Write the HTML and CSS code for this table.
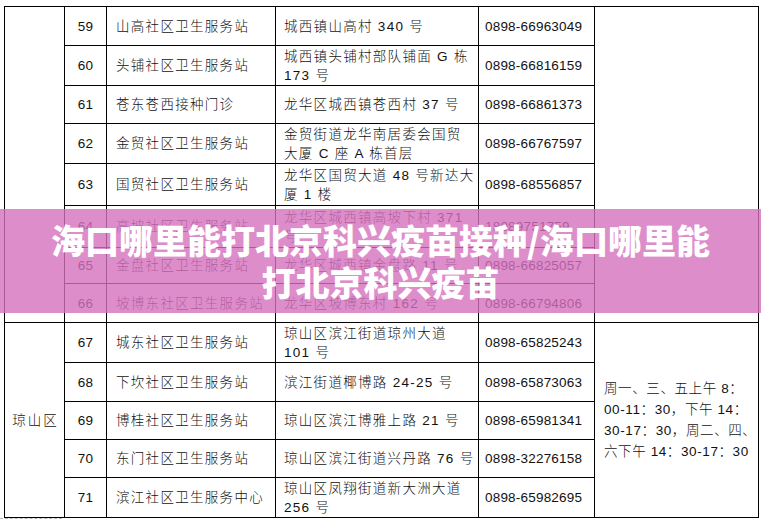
FILE: index.html
```html
<!DOCTYPE html>
<html lang="zh-CN">
<head>
<meta charset="utf-8">
<title>海口哪里能打北京科兴疫苗</title>
<link rel="stylesheet" href="styles.css">
</head>
<body>
<div class="page">
  <table class="sites">
    <colgroup>
      <col class="c-district"><col class="c-no"><col class="c-name"><col class="c-addr"><col class="c-tel"><col class="c-hours">
    </colgroup>
    <tbody>
      <tr class="h39">
        <td class="district" rowspan="8"></td>
        <td class="no">59</td>
        <td class="name">山高社区卫生服务站</td>
        <td class="addr">城西镇山高村 340 号</td>
        <td class="tel">0898-66963049</td>
        <td class="hours" rowspan="8"></td>
      </tr>
      <tr class="h40">
        <td class="no">60</td>
        <td class="name">头铺社区卫生服务站</td>
        <td class="addr">城西镇头铺村部队铺面 G 栋<br>173 号</td>
        <td class="tel">0898-66816159</td>
      </tr>
      <tr class="h38">
        <td class="no">61</td>
        <td class="name">苍东苍西接种门诊</td>
        <td class="addr">龙华区城西镇苍西村 37 号</td>
        <td class="tel">0898-66861373</td>
      </tr>
      <tr class="h40">
        <td class="no">62</td>
        <td class="name">金贸社区卫生服务站</td>
        <td class="addr">金贸街道龙华南居委会国贸<br>大厦 C 座 A 栋首层</td>
        <td class="tel">0898-66767597</td>
      </tr>
      <tr class="h42">
        <td class="no">63</td>
        <td class="name">国贸社区卫生服务站</td>
        <td class="addr">龙华区国贸大道 48 号新达大<br>厦 1 楼</td>
        <td class="tel">0898-68556857</td>
      </tr>
      <tr class="h42">
        <td class="no">64</td>
        <td class="name">高坡社区卫生服务站</td>
        <td class="addr">龙华区城西镇高坡下村 371<br>号</td>
        <td class="tel">18089751759</td>
      </tr>
      <tr class="h36">
        <td class="no">65</td>
        <td class="name">金盘社区卫生服务站</td>
        <td class="addr">龙华区城西镇金盘路 11 号</td>
        <td class="tel">0898-66825057</td>
      </tr>
      <tr class="h39">
        <td class="no">66</td>
        <td class="name">坡博东社区卫生服务站</td>
        <td class="addr">龙华区坡博东村 162 号</td>
        <td class="tel">0898-66794806</td>
      </tr>
      <tr class="h40">
        <td class="district" rowspan="5">琼山区</td>
        <td class="no">67</td>
        <td class="name">城东社区卫生服务站</td>
        <td class="addr">琼山区滨江街道琼州大道<br>101 号</td>
        <td class="tel">0898-65825243</td>
        <td class="hours" rowspan="5">周一、三、五上午 8：<br>00-11：30，下午 14：<br>30-17：30，周二、四、<br>六下午 14：30-17：30</td>
      </tr>
      <tr class="h39">
        <td class="no">68</td>
        <td class="name">下坎社区卫生服务站</td>
        <td class="addr">滨江街道椰博路 24-25 号</td>
        <td class="tel">0898-65873063</td>
      </tr>
      <tr class="h38">
        <td class="no">69</td>
        <td class="name">博桂社区卫生服务站</td>
        <td class="addr">琼山区滨江博雅上路 21 号</td>
        <td class="tel">0898-65981341</td>
      </tr>
      <tr class="h38">
        <td class="no">70</td>
        <td class="name">东门社区卫生服务站</td>
        <td class="addr">琼山区滨江街道兴丹路 76 号</td>
        <td class="tel">0898-32276158</td>
      </tr>
      <tr class="h40">
        <td class="no">71</td>
        <td class="name">滨江社区卫生服务中心</td>
        <td class="addr">琼山区凤翔街道新大洲大道<br>256 号</td>
        <td class="tel">0898-65982695</td>
      </tr>
    </tbody>
  </table>
  <div class="page-break"></div>
</div>
<div class="banner">
  <h1 class="banner-title">海口哪里能打北京科兴疫苗接种/海口哪里能<br>打北京科兴疫苗</h1>
</div>
</body>
</html>
```

FILE: styles.css
```css
html, body {
  margin: 0;
  padding: 0;
  background: #fff;
}

body {
  position: relative;
  width: 761px;
  height: 522px;
  overflow: hidden;
  font-family: "Liberation Sans", "Noto Sans CJK SC", sans-serif;
  color: #111;
}

.page {
  padding: 6px 0 0 4px;
}

.sites {
  border-collapse: collapse;
  table-layout: fixed;
  width: 755px;
}

.c-district { width: 60px; }
.c-no { width: 42px; }
.c-name { width: 169px; }
.c-addr { width: 203px; }
.c-tel { width: 116px; }
.c-hours { width: 164px; }

.sites td {
  border: 1px solid #000;
  padding: 0;
  vertical-align: middle;
  font-size: 13.5px;
  line-height: 19px;
  font-weight: 300;
  white-space: nowrap;
  overflow: hidden;
}

.h36 td { height: 35px; }
.h38 td { height: 37px; }
.h39 td { height: 38px; }
.h40 td { height: 39px; }
.h42 td { height: 41px; }

.sites td.district {
  text-align: center;
  letter-spacing: 2px;
  padding-left: 2px;
}

.sites td.no {
  text-align: center;
  letter-spacing: 0.3px;
}

.sites td.name {
  padding-left: 9px;
  letter-spacing: 1.3px;
}

.sites td.addr {
  padding-left: 8px;
  letter-spacing: 1.3px;
}

.sites td.tel {
  padding-left: 6px;
  letter-spacing: 0.2px;
}

.sites td.hours {
  padding-left: 9px;
  line-height: 21px;
  letter-spacing: 0.6px;
}

.page-break {
  width: 62px;
  margin-left: -4px;
  border-top: 1px dashed #b8b8b8;
}

.banner {
  position: absolute;
  left: 0;
  right: 0;
  top: 209px;
  height: 104px;
  background: rgba(214, 112, 190, 0.8);
  display: flex;
  align-items: center;
  justify-content: center;
}

.banner-title {
  margin: 0;
  color: #fff;
  font-family: "Noto Sans CJK SC", sans-serif;
  font-weight: 900;
  font-size: 34px;
  line-height: 42px;
  text-align: center;
  letter-spacing: 0;
}
```
